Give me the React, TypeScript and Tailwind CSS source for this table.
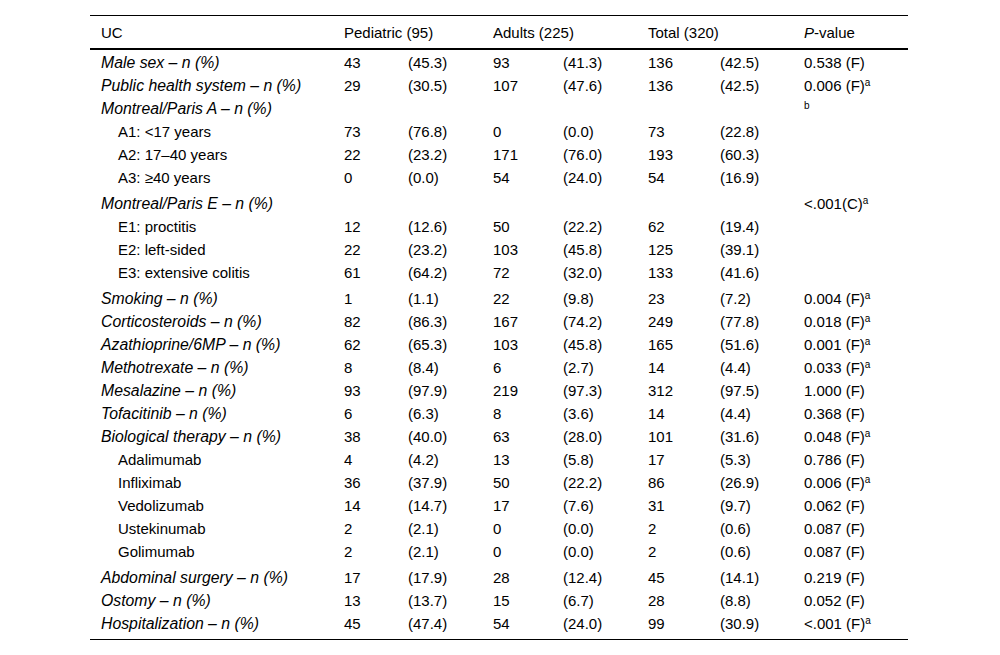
import React from "react";

type Row = {
  label: string;
  sub?: boolean;
  extra?: boolean;
  v?: [string, string, string, string, string, string];
  p?: string;
  sup?: string;
};

const rows: Row[] = [
  { label: "Male sex – n (%)", v: ["43", "(45.3)", "93", "(41.3)", "136", "(42.5)"], p: "0.538 (F)" },
  { label: "Public health system – n (%)", v: ["29", "(30.5)", "107", "(47.6)", "136", "(42.5)"], p: "0.006 (F)", sup: "a" },
  { label: "Montreal/Paris A – n (%)", p: "", sup: "b" },
  { label: "A1: <17 years", sub: true, v: ["73", "(76.8)", "0", "(0.0)", "73", "(22.8)"] },
  { label: "A2: 17–40 years", sub: true, v: ["22", "(23.2)", "171", "(76.0)", "193", "(60.3)"] },
  { label: "A3: ≥40 years", sub: true, v: ["0", "(0.0)", "54", "(24.0)", "54", "(16.9)"] },
  { label: "Montreal/Paris E – n (%)", extra: true, p: "<.001(C)", sup: "a" },
  { label: "E1: proctitis", sub: true, v: ["12", "(12.6)", "50", "(22.2)", "62", "(19.4)"] },
  { label: "E2: left-sided", sub: true, v: ["22", "(23.2)", "103", "(45.8)", "125", "(39.1)"] },
  { label: "E3: extensive colitis", sub: true, v: ["61", "(64.2)", "72", "(32.0)", "133", "(41.6)"] },
  { label: "Smoking – n (%)", extra: true, v: ["1", "(1.1)", "22", "(9.8)", "23", "(7.2)"], p: "0.004 (F)", sup: "a" },
  { label: "Corticosteroids – n (%)", v: ["82", "(86.3)", "167", "(74.2)", "249", "(77.8)"], p: "0.018 (F)", sup: "a" },
  { label: "Azathioprine/6MP – n (%)", v: ["62", "(65.3)", "103", "(45.8)", "165", "(51.6)"], p: "0.001 (F)", sup: "a" },
  { label: "Methotrexate – n (%)", v: ["8", "(8.4)", "6", "(2.7)", "14", "(4.4)"], p: "0.033 (F)", sup: "a" },
  { label: "Mesalazine – n (%)", v: ["93", "(97.9)", "219", "(97.3)", "312", "(97.5)"], p: "1.000 (F)" },
  { label: "Tofacitinib – n (%)", v: ["6", "(6.3)", "8", "(3.6)", "14", "(4.4)"], p: "0.368 (F)" },
  { label: "Biological therapy – n (%)", v: ["38", "(40.0)", "63", "(28.0)", "101", "(31.6)"], p: "0.048 (F)", sup: "a" },
  { label: "Adalimumab", sub: true, v: ["4", "(4.2)", "13", "(5.8)", "17", "(5.3)"], p: "0.786 (F)" },
  { label: "Infliximab", sub: true, v: ["36", "(37.9)", "50", "(22.2)", "86", "(26.9)"], p: "0.006 (F)", sup: "a" },
  { label: "Vedolizumab", sub: true, v: ["14", "(14.7)", "17", "(7.6)", "31", "(9.7)"], p: "0.062 (F)" },
  { label: "Ustekinumab", sub: true, v: ["2", "(2.1)", "0", "(0.0)", "2", "(0.6)"], p: "0.087 (F)" },
  { label: "Golimumab", sub: true, v: ["2", "(2.1)", "0", "(0.0)", "2", "(0.6)"], p: "0.087 (F)" },
  { label: "Abdominal surgery – n (%)", extra: true, v: ["17", "(17.9)", "28", "(12.4)", "45", "(14.1)"], p: "0.219 (F)" },
  { label: "Ostomy – n (%)", v: ["13", "(13.7)", "15", "(6.7)", "28", "(8.8)"], p: "0.052 (F)" },
  { label: "Hospitalization – n (%)", v: ["45", "(47.4)", "54", "(24.0)", "99", "(30.9)"], p: "<.001 (F)", sup: "a" },
];

const grid = "grid grid-cols-[243px_64px_85px_70px_85px_72px_84px_115px] items-center";

export default function App() {
  return (
    <div className="w-[1000px] h-[655px] bg-white pt-[15px] text-black text-[15px] leading-[17px] font-['Liberation_Sans',Arial,sans-serif]">
      <div className="ml-[90px] w-[818px] border-t border-b border-black">
        <div className={`${grid} h-[34px] border-b-2 border-black pt-[1px]`}>
          <div className="pl-[11px]">UC</div>
          <div className="pl-[11px] col-span-2">Pediatric (95)</div>
          <div className="pl-[11px] col-span-2">Adults (225)</div>
          <div className="pl-[11px] col-span-2">Total (320)</div>
          <div className="pl-[11px]">
            <span className="italic">P</span>-value
          </div>
        </div>
        {rows.map((r, i) => {
          const first = i === 0;
          const last = i === rows.length - 1;
          const h = first
            ? "h-[24px]"
            : last
            ? "h-[27px] pb-[4px]"
            : r.extra
            ? "h-[26px] pt-[3px]"
            : "h-[23px]";
          return (
            <div key={i} className={`${grid} ${h}`}>
              <div
                className={
                  r.sub
                    ? "pl-[28px] whitespace-nowrap"
                    : "pl-[11px] italic whitespace-nowrap text-[15.8px]"
                }
              >
                {r.label}
              </div>
              {(r.v ?? ["", "", "", "", "", ""]).map((c, j) => (
                <div key={j} className="pl-[11px] whitespace-nowrap">
                  {c}
                </div>
              ))}
              <div className="pl-[11px] whitespace-nowrap">
                {r.p}
                {r.sup ? <sup className="text-[10px]">{r.sup}</sup> : null}
              </div>
            </div>
          );
        })}
      </div>
    </div>
  );
}
